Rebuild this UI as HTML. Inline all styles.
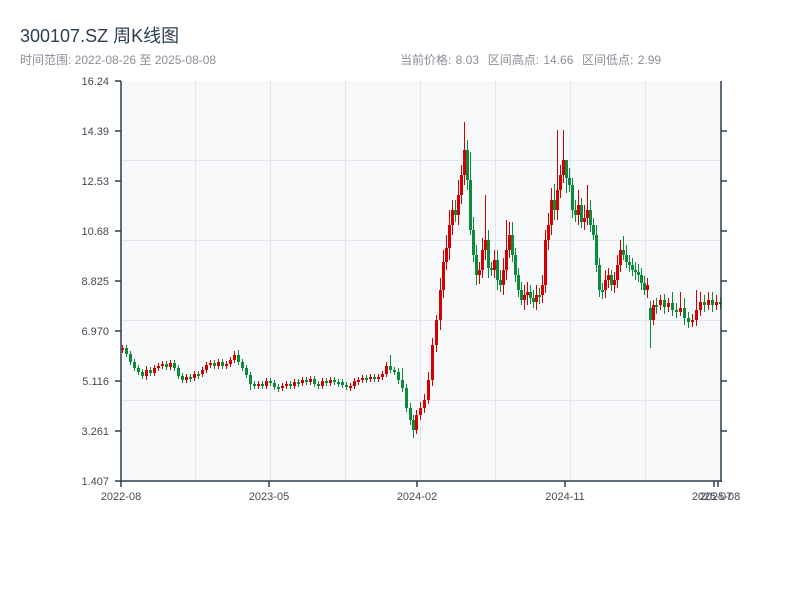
<!DOCTYPE html>
<html><head><meta charset="utf-8"><style>
body{margin:0;background:#fff;width:800px;height:600px;overflow:hidden;font-family:"Liberation Sans","Noto Sans CJK SC",sans-serif;}
.t{position:absolute;left:20px;top:22px;font-size:18px;color:#2c3e50;}
.s{position:absolute;left:20px;top:51px;font-size:12px;color:#8a8f96;}
.r{position:absolute;left:400px;top:51px;font-size:12px;color:#8a8f96;word-spacing:1px}
svg{position:absolute;left:0;top:0}
</style></head><body>
<div class="t">300107.SZ 周K线图</div>
<div class="s">时间范围: 2022-08-26 至 2025-08-08</div>
<div class="r">当前价格: 8.03&nbsp; 区间高点: 14.66&nbsp; 区间低点: 2.99</div>
<svg width="800" height="600">
<rect x="121" y="81" width="600" height="400" fill="#f6f8fa"/>
<g stroke="#e1e4e8" stroke-width="1">
<line x1="121" x2="721" y1="160.5" y2="160.5"/><line x1="121" x2="721" y1="240.5" y2="240.5"/>
<line x1="121" x2="721" y1="320.5" y2="320.5"/><line x1="121" x2="721" y1="400.5" y2="400.5"/>
<line y1="81" y2="481" x1="195.5" x2="195.5"/><line y1="81" y2="481" x1="270.5" x2="270.5"/>
<line y1="81" y2="481" x1="345.5" x2="345.5"/><line y1="81" y2="481" x1="420.5" x2="420.5"/>
<line y1="81" y2="481" x1="495.5" x2="495.5"/><line y1="81" y2="481" x1="570.5" x2="570.5"/>
<line y1="81" y2="481" x1="645.5" x2="645.5"/>
</g>
<!-- red wicks -->
<path stroke="#d40000" stroke-width="1" fill="none" d="M122.5 345V353M146.5 366V380M154.5 365V376M158.5 363V371M162.5 361V369M170.5 360V370M186.5 374V383M194.5 371V381M202.5 367V377M206.5 362V373M210.5 360V368M218.5 359V369M226.5 361V369M230.5 357V367M234.5 351V363M258.5 381V389M266.5 378V389M282.5 383V391M286.5 381V389M294.5 379V389M302.5 377V386M310.5 376V385M322.5 378V389M330.5 377V386M350.5 383V391M354.5 378V389M358.5 377V385M362.5 375V383M370.5 374V382M378.5 374V382M382.5 371V380M386.5 362V377M416.5 410V434M420.5 402V420M424.5 394V413M428.5 372V404M432.5 338V386M436.5 315V352M440.5 278V330M443.5 250V298M446.5 235V270M449.5 210V260M452.5 200V235M458.5 180V225M461.5 165V204M464.5 122V185M479.5 262V284M482.5 238V278M485.5 195V260M494.5 250V278M503.5 258V295M506.5 220V280M509.5 222V258M524.5 285V310M527.5 282V305M536.5 285V310M542.5 275V303M545.5 230V293M548.5 213V250M551.5 188V235M557.5 130V220M560.5 165V198M563.5 130V183M578.5 190V225M584.5 205V230M587.5 185V225M605.5 270V298M608.5 268V288M614.5 272V293M617.5 255V288M620.5 240V272M647.5 278V298M653.5 300V325M660.5 295V310M668.5 298V312M680.5 292V316M692.5 314V327M696.5 290V326M700.5 292V316M708.5 292V310M716.5 295V310"/>
<path stroke="#d40000" stroke-width="3" fill="none" d="M122.5 348V350M146.5 370V376M154.5 368V373M158.5 366V368M162.5 364V366M170.5 363V367M186.5 377V380M194.5 374V378M202.5 370V374M206.5 365V370M210.5 363V365M218.5 362V366M226.5 364V366M230.5 360V364M234.5 355V360M258.5 384V386M266.5 381V386M282.5 386V388M286.5 384V386M294.5 382V386M302.5 380V383M310.5 379V382M322.5 381V386M330.5 380V383M350.5 386V388M354.5 381V386M358.5 380V382M362.5 378V380M370.5 377V379M378.5 377V379M382.5 374V377M386.5 366V374M416.5 415V430M420.5 408V415M424.5 400V408M428.5 380V400M432.5 345V380M436.5 320V345M440.5 290V320M443.5 262V290M446.5 248V262M449.5 225V248M452.5 210V225M458.5 195V215M461.5 175V195M464.5 150V175M479.5 270V275M482.5 250V270M485.5 240V250M494.5 260V270M503.5 270V285M506.5 250V270M509.5 235V250M524.5 295V300M527.5 292V295M536.5 295V302M542.5 285V295M545.5 240V285M548.5 225V240M551.5 200V225M557.5 190V210M560.5 175V190M563.5 160V175M578.5 205V215M584.5 218V222M587.5 210V218M605.5 280V290M608.5 275V280M614.5 280V285M617.5 265V280M620.5 250V265M647.5 285V290M653.5 305V320M660.5 300V305M668.5 303V307M680.5 308V312M692.5 320V322M696.5 310V320M700.5 302V310M708.5 300V305M716.5 302V305"/>
<!-- green wicks -->
<path stroke="#0a8a3a" stroke-width="1" fill="none" d="M126.5 345V357M130.5 351V365M134.5 359V371M138.5 365V375M142.5 369V379M150.5 367V376M166.5 361V370M174.5 360V371M178.5 365V379M182.5 373V383M190.5 374V382M198.5 371V379M214.5 360V369M222.5 359V369M238.5 350V365M242.5 359V371M246.5 365V378M250.5 372V390M254.5 381V389M262.5 381V389M270.5 378V386M274.5 380V390M278.5 384V392M290.5 381V389M298.5 379V387M306.5 377V385M314.5 376V387M318.5 381V389M326.5 378V386M334.5 377V385M338.5 379V387M342.5 379V388M346.5 382V390M366.5 375V383M374.5 374V382M390.5 355V373M394.5 367V375M398.5 368V384M402.5 368V392M406.5 384V412M410.5 403V425M413.5 415V438M455.5 200V222M467.5 140V190M470.5 152V235M473.5 217V262M476.5 245V285M488.5 230V278M491.5 262V276M497.5 250V290M500.5 270V292M512.5 222V262M515.5 248V282M518.5 268V297M521.5 282V305M530.5 285V304M533.5 290V308M539.5 288V304M554.5 184V220M566.5 170V193M569.5 168V192M572.5 178V218M575.5 200V222M581.5 198V228M590.5 200V232M593.5 218V240M596.5 225V272M599.5 258V297M602.5 283V299M611.5 270V291M623.5 236V260M626.5 245V268M629.5 255V272M632.5 258V276M635.5 262V280M638.5 264V282M641.5 268V290M644.5 276V295M650.5 301V348M656.5 298V314M664.5 294V314M672.5 292V316M676.5 303V318M684.5 298V325M688.5 312V328M704.5 295V312M712.5 292V312M720.5 298V309"/>
<path stroke="#0a8a3a" stroke-width="3" fill="none" d="M126.5 348V354M130.5 354V362M134.5 362V368M138.5 368V372M142.5 372V376M150.5 370V373M166.5 364V367M174.5 363V368M178.5 368V376M182.5 376V380M190.5 377V379M198.5 374V376M214.5 363V366M222.5 362V366M238.5 355V362M242.5 362V368M246.5 368V375M250.5 375V384M254.5 384V386M262.5 384V386M270.5 381V383M274.5 383V387M278.5 387V389M290.5 384V386M298.5 382V384M306.5 380V382M314.5 379V384M318.5 384V386M326.5 381V383M334.5 380V382M338.5 382V384M342.5 382V385M346.5 385V387M366.5 378V380M374.5 377V379M390.5 366V370M394.5 370V372M398.5 372V380M402.5 380V388M406.5 388V408M410.5 408V420M413.5 420V430M455.5 210V215M467.5 150V180M470.5 180V230M473.5 230V255M476.5 255V275M488.5 240V268M491.5 268V270M497.5 260V280M500.5 280V285M512.5 235V255M515.5 255V275M518.5 275V290M521.5 290V300M530.5 292V298M533.5 298V302M539.5 295V297M554.5 200V210M566.5 160V178M569.5 178V185M572.5 185V210M575.5 210V215M581.5 205V222M590.5 210V225M593.5 225V235M596.5 235V265M599.5 265V290M602.5 290V292M611.5 275V285M623.5 250V255M626.5 255V262M629.5 262V265M632.5 265V270M635.5 270V272M638.5 272V275M641.5 275V283M644.5 283V290M650.5 308V320M656.5 305V307M664.5 300V307M672.5 303V310M676.5 310V312M684.5 308V318M688.5 318V322M704.5 302V305M712.5 300V305M720.5 302V304"/>
<g stroke="#2c3e50" stroke-width="1.5" fill="none">
<line x1="121" x2="121" y1="81" y2="482"/><line x1="721" x2="721" y1="81" y2="482"/>
<line x1="120" x2="722" y1="481" y2="481"/>
<line x1="115" x2="121" y1="81" y2="81"/><line x1="115" x2="121" y1="131" y2="131"/><line x1="115" x2="121" y1="181" y2="181"/>
<line x1="115" x2="121" y1="231" y2="231"/><line x1="115" x2="121" y1="281" y2="281"/><line x1="115" x2="121" y1="331" y2="331"/>
<line x1="115" x2="121" y1="381" y2="381"/><line x1="115" x2="121" y1="431" y2="431"/><line x1="115" x2="121" y1="481" y2="481"/>
<line x1="721" x2="727" y1="131" y2="131"/><line x1="721" x2="727" y1="181" y2="181"/><line x1="721" x2="727" y1="231" y2="231"/>
<line x1="721" x2="727" y1="281" y2="281"/><line x1="721" x2="727" y1="331" y2="331"/><line x1="721" x2="727" y1="381" y2="381"/>
<line x1="721" x2="727" y1="431" y2="431"/>
<line x1="121" x2="121" y1="481" y2="487"/><line x1="269" x2="269" y1="481" y2="487"/><line x1="417" x2="417" y1="481" y2="487"/>
<line x1="565" x2="565" y1="481" y2="487"/><line x1="714" x2="714" y1="481" y2="487"/><line x1="718" x2="718" y1="481" y2="487"/>
</g>
<g font-size="11" fill="#444c56" text-anchor="end" font-family="Liberation Sans,sans-serif">
<text x="109" y="85">16.24</text><text x="109" y="135">14.39</text><text x="109" y="185">12.53</text>
<text x="109" y="235">10.68</text><text x="109" y="285">8.825</text><text x="109" y="335">6.970</text>
<text x="109" y="385">5.116</text><text x="109" y="435">3.261</text><text x="109" y="485">1.407</text>
</g>
<g font-size="11" fill="#444c56" text-anchor="middle" font-family="Liberation Sans,sans-serif">
<text x="121" y="500">2022-08</text><text x="269" y="500">2023-05</text><text x="417" y="500">2024-02</text>
<text x="565" y="500">2024-11</text><text x="712" y="500">2025-07</text><text x="720" y="500">2025-08</text>
</g>
</svg>
</body></html>
